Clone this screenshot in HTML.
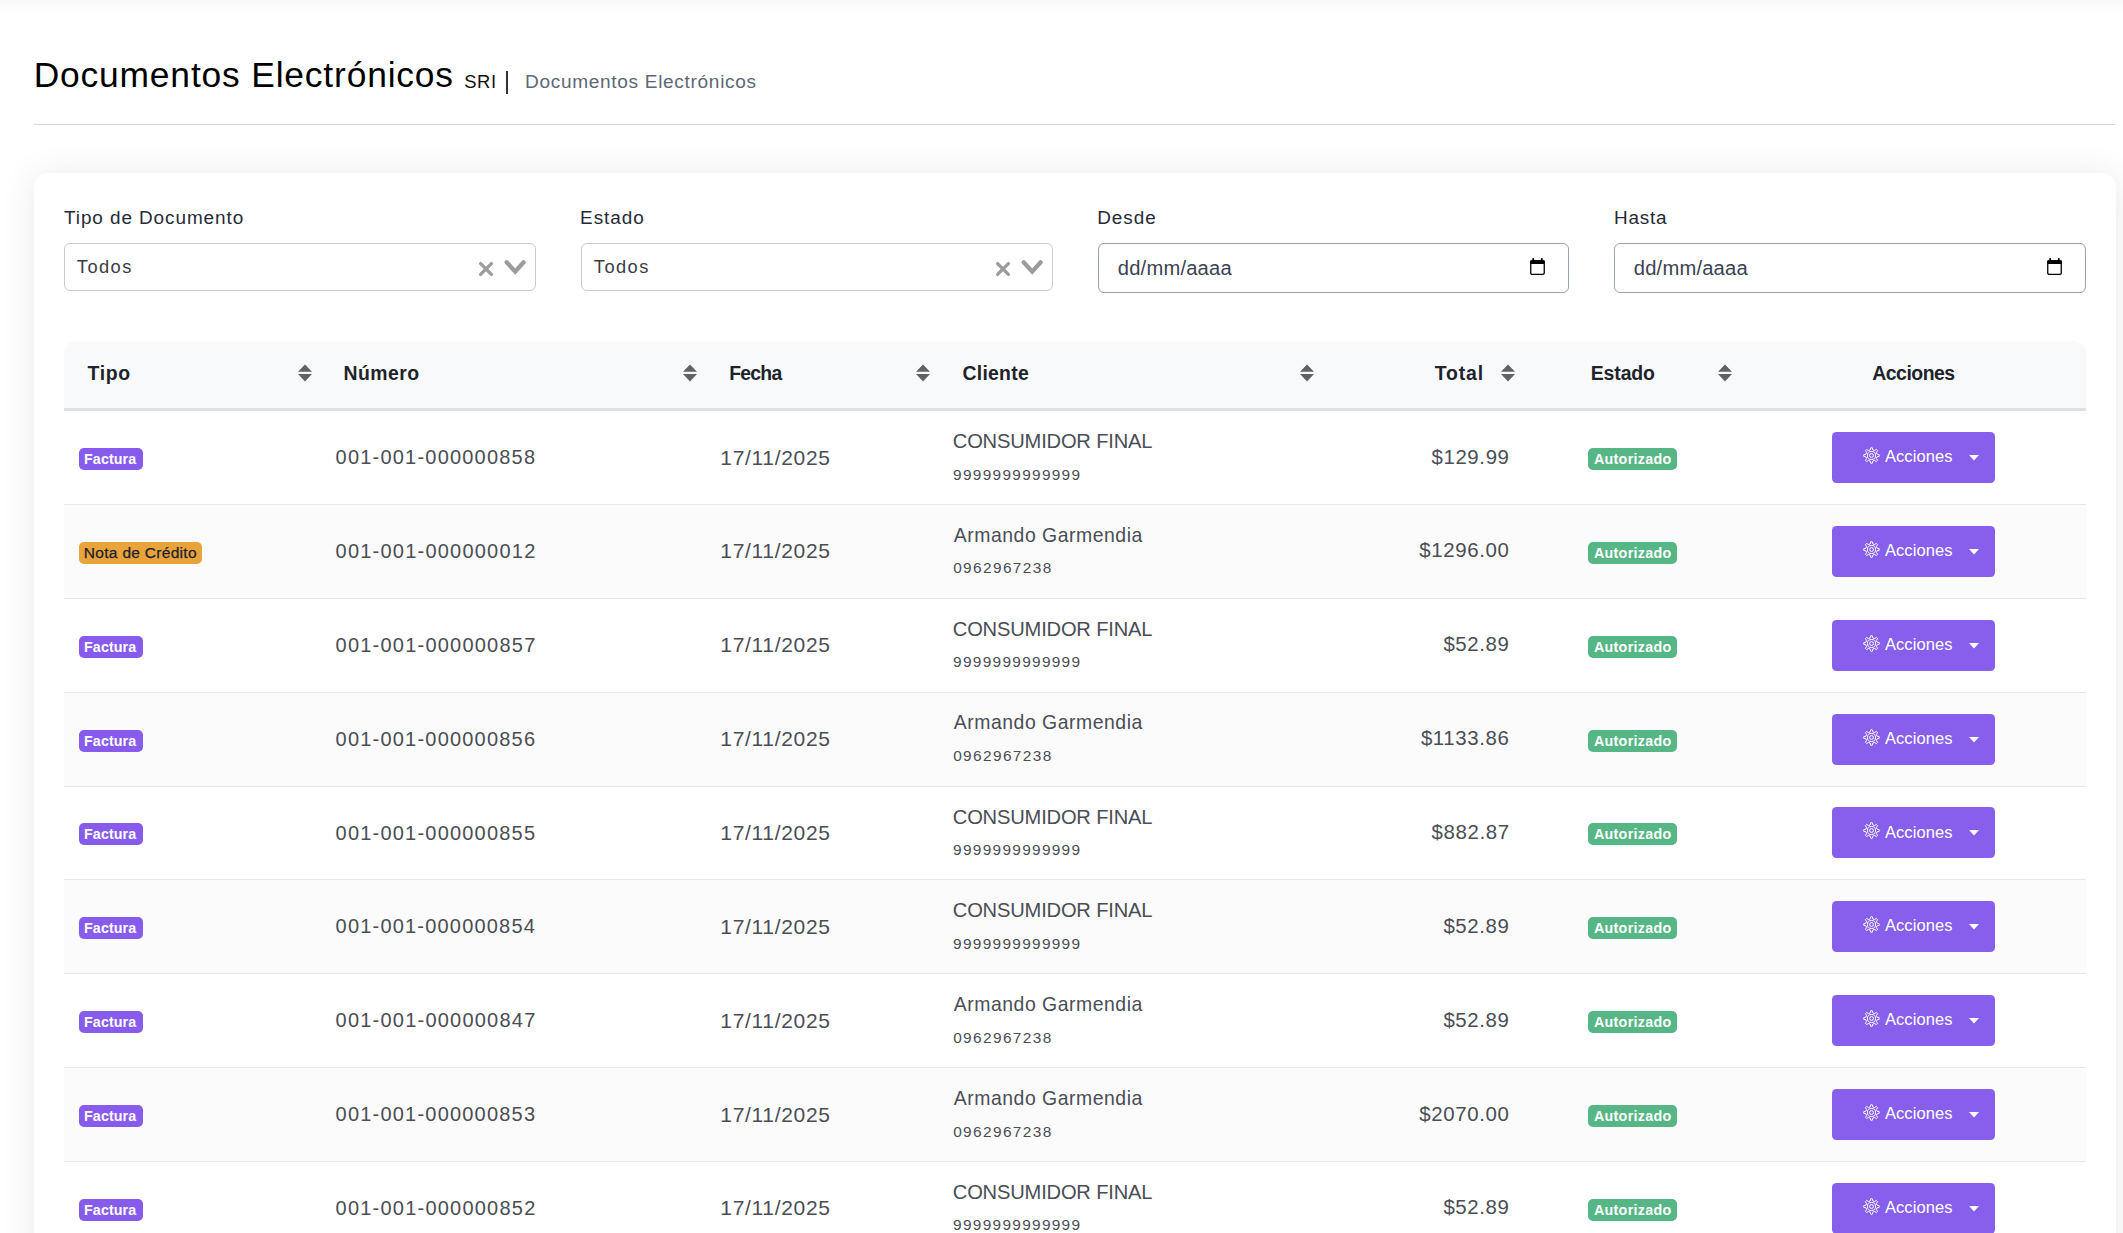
<!DOCTYPE html>
<html><head><meta charset="utf-8"><title>Documentos Electrónicos</title>
<style>
html,body{margin:0;padding:0;}
body{width:2123px;height:1233px;overflow:hidden;position:relative;background:#fff;font-family:"Liberation Sans",sans-serif;}
.t{position:absolute;white-space:nowrap;}
.r{position:absolute;}
.topshadow{position:absolute;left:-50px;right:-50px;top:-40px;height:40px;box-shadow:0 3px 14px rgba(0,0,0,0.04);background:#fff;}
.card{position:absolute;left:34px;top:173px;width:2082px;height:1200px;background:#fff;border-radius:14px;box-shadow:0 2px 36px rgba(0,0,0,0.09);}
.sel{position:absolute;top:243px;width:470px;height:46px;border:1px solid #cbcbcb;border-radius:6px;background:#fff;}
.date{position:absolute;top:243px;width:469px;height:48px;border:1px solid #9aa1b0;border-radius:6px;background:#fff;}
.thead{position:absolute;left:64px;top:341px;width:2022px;height:67px;background:#f8f9fa;border-radius:13px 13px 0 0;border-bottom:3px solid #dee1e6;}
.row{position:absolute;left:64px;width:2022px;border-bottom:1px solid #e6e8ec;}
.badge{height:22px;border-radius:5px;}
.btn{left:1832px;width:163px;height:51px;background:#875fec;border-radius:4.5px;}
</style></head><body>
<div class="topshadow"></div>
<div class="t" style="left:33.67px;top:57.15px;font-size:35.38px;line-height:35.38px;letter-spacing:0.832px;color:#000;">Documentos Electrónicos</div>
<div class="t" style="left:464.17px;top:72.63px;font-size:18.40px;line-height:18.40px;letter-spacing:0.674px;color:#111;">SRI</div>
<div class="r" style="left:506px;top:71px;width:2px;height:23px;background:#333;"></div>
<div class="t" style="left:524.97px;top:72.06px;font-size:19.07px;line-height:19.07px;letter-spacing:0.681px;color:#5d6777;">Documentos Electrónicos</div>
<div class="r" style="left:34px;top:124px;width:2081px;height:1px;background:#d6d7df;"></div>
<div class="card"></div>
<div class="t" style="left:64.02px;top:208.57px;font-size:18.93px;line-height:18.93px;letter-spacing:0.919px;color:#262a36;">Tipo de Documento</div>
<div class="t" style="left:580.09px;top:208.57px;font-size:18.93px;line-height:18.93px;letter-spacing:0.958px;color:#262a36;">Estado</div>
<div class="t" style="left:1097.19px;top:208.57px;font-size:18.93px;line-height:18.93px;letter-spacing:0.987px;color:#262a36;">Desde</div>
<div class="t" style="left:1614.09px;top:208.57px;font-size:18.93px;line-height:18.93px;letter-spacing:0.750px;color:#262a36;">Hasta</div>
<div class="sel" style="left:64px;"></div>
<div class="t" style="left:76.83px;top:257.54px;font-size:18.27px;line-height:18.27px;letter-spacing:1.433px;color:#3a3d45;">Todos</div>
<svg class="r" style="left:477.5px;top:260.8px" width="16" height="16" viewBox="0 0 16 16"><path d="M2.6 2.6L13.4 13.4M13.4 2.6L2.6 13.4" stroke="#9c9c9c" stroke-width="3.3" stroke-linecap="round"/></svg>
<svg class="r" style="left:504.4px;top:259.4px" width="22" height="16" viewBox="0 0 22 16"><path d="M2.7 3.3L11.2 12.6L19.6 3.3" fill="none" stroke="#9c9c9c" stroke-width="4.3" stroke-linecap="round" stroke-linejoin="miter"/></svg>
<div class="sel" style="left:581px;"></div>
<div class="t" style="left:593.83px;top:257.54px;font-size:18.27px;line-height:18.27px;letter-spacing:1.433px;color:#3a3d45;">Todos</div>
<svg class="r" style="left:994.5px;top:260.8px" width="16" height="16" viewBox="0 0 16 16"><path d="M2.6 2.6L13.4 13.4M13.4 2.6L2.6 13.4" stroke="#9c9c9c" stroke-width="3.3" stroke-linecap="round"/></svg>
<svg class="r" style="left:1021.4px;top:259.4px" width="22" height="16" viewBox="0 0 22 16"><path d="M2.7 3.3L11.2 12.6L19.6 3.3" fill="none" stroke="#9c9c9c" stroke-width="4.3" stroke-linecap="round" stroke-linejoin="miter"/></svg>
<div class="date" style="left:1098px;"></div>
<div class="t" style="left:1117.79px;top:257.92px;font-size:20.18px;line-height:20.18px;letter-spacing:0.192px;color:#3b4252;">dd/mm/aaaa</div>
<svg class="r" style="left:1529px;top:258px" width="17" height="18" viewBox="0 0 17 18"><path d="M4.2 1v2.5M12.8 1v2.5" stroke="#000" stroke-width="1.9" stroke-linecap="round"/><rect x="1.75" y="2.85" width="13.5" height="13.5" rx="1.4" fill="none" stroke="#000" stroke-width="1.3"/><rect x="1.1" y="2.2" width="14.8" height="3.7" rx="1.1" fill="#000"/></svg>
<div class="date" style="left:1614px;width:470px;"></div>
<div class="t" style="left:1633.79px;top:257.92px;font-size:20.18px;line-height:20.18px;letter-spacing:0.192px;color:#3b4252;">dd/mm/aaaa</div>
<svg class="r" style="left:2046px;top:258px" width="17" height="18" viewBox="0 0 17 18"><path d="M4.2 1v2.5M12.8 1v2.5" stroke="#000" stroke-width="1.9" stroke-linecap="round"/><rect x="1.75" y="2.85" width="13.5" height="13.5" rx="1.4" fill="none" stroke="#000" stroke-width="1.3"/><rect x="1.1" y="2.2" width="14.8" height="3.7" rx="1.1" fill="#000"/></svg>
<div class="thead"></div>
<div class="t" style="left:87.61px;top:364.28px;font-size:19.40px;line-height:19.40px;letter-spacing:0.641px;color:#1f232b;font-weight:700;">Tipo</div>
<div class="t" style="left:343.54px;top:364.28px;font-size:19.40px;line-height:19.40px;letter-spacing:0.461px;color:#1f232b;font-weight:700;">Número</div>
<div class="t" style="left:729.34px;top:364.28px;font-size:19.40px;line-height:19.40px;letter-spacing:-0.800px;color:#1f232b;font-weight:700;">Fecha</div>
<div class="t" style="left:962.52px;top:364.28px;font-size:19.40px;line-height:19.40px;letter-spacing:0.259px;color:#1f232b;font-weight:700;">Cliente</div>
<div class="t" style="left:1434.81px;top:364.28px;font-size:19.40px;line-height:19.40px;letter-spacing:0.860px;color:#1f232b;font-weight:700;">Total</div>
<div class="t" style="left:1590.74px;top:364.28px;font-size:19.40px;line-height:19.40px;letter-spacing:-0.092px;color:#1f232b;font-weight:700;">Estado</div>
<div class="t" style="left:1872.32px;top:364.28px;font-size:19.40px;line-height:19.40px;letter-spacing:-0.496px;color:#1f232b;font-weight:700;">Acciones</div>
<svg class="r" style="left:298px;top:364px" width="14" height="18" viewBox="0 0 14 18"><path d="M7 0.4L14 7.7H0Z M0 10.1H14L7 17.4Z" fill="#606266"/></svg>
<svg class="r" style="left:683px;top:364px" width="14" height="18" viewBox="0 0 14 18"><path d="M7 0.4L14 7.7H0Z M0 10.1H14L7 17.4Z" fill="#606266"/></svg>
<svg class="r" style="left:916px;top:364px" width="14" height="18" viewBox="0 0 14 18"><path d="M7 0.4L14 7.7H0Z M0 10.1H14L7 17.4Z" fill="#606266"/></svg>
<svg class="r" style="left:1300px;top:364px" width="14" height="18" viewBox="0 0 14 18"><path d="M7 0.4L14 7.7H0Z M0 10.1H14L7 17.4Z" fill="#606266"/></svg>
<svg class="r" style="left:1501px;top:364px" width="14" height="18" viewBox="0 0 14 18"><path d="M7 0.4L14 7.7H0Z M0 10.1H14L7 17.4Z" fill="#606266"/></svg>
<svg class="r" style="left:1718px;top:364px" width="14" height="18" viewBox="0 0 14 18"><path d="M7 0.4L14 7.7H0Z M0 10.1H14L7 17.4Z" fill="#606266"/></svg>
<div class="row" style="top:411px;height:93px;background:#fff;"></div>
<div class="r badge" style="left:79px;top:448px;width:64px;background:#875bec;"></div>
<div class="t" style="left:84.07px;top:452.02px;font-size:14.27px;line-height:14.27px;letter-spacing:0.097px;color:#fff;font-weight:700;">Factura</div>
<div class="t" style="left:335.60px;top:447.07px;font-size:20.00px;line-height:20.00px;letter-spacing:1.206px;color:#4a4d55;">001-001-000000858</div>
<div class="t" style="left:720.32px;top:446.61px;font-size:21.01px;line-height:21.01px;letter-spacing:0.679px;color:#4a4d55;">17/11/2025</div>
<div class="t" style="left:952.79px;top:431.15px;font-size:20.14px;line-height:20.14px;letter-spacing:-0.182px;color:#4a4d55;">CONSUMIDOR FINAL</div>
<div class="t" style="left:953.11px;top:466.54px;font-size:15.43px;line-height:15.43px;letter-spacing:1.287px;color:#4a4d55;">9999999999999</div>
<div class="t" style="left:1431.43px;top:446.60px;font-size:20.43px;line-height:20.43px;letter-spacing:0.620px;color:#4a4d55;">$129.99</div>
<div class="r badge" style="left:1588px;top:448px;width:89px;background:#57b685;"></div>
<div class="t" style="left:1593.94px;top:452.02px;font-size:14.27px;line-height:14.27px;letter-spacing:0.306px;color:#fff;font-weight:700;">Autorizado</div>
<div class="r btn" style="top:432px;"></div>
<div class="r" style="left:1862.5px;top:447.00px;width:17px;height:17px"><svg width="17" height="17" viewBox="0 0 24 24" fill="none" stroke="#fff" stroke-width="1.4" stroke-linejoin="round"><path d="M10.01 4.25 L10.88 1.06 L13.12 1.06 L13.99 4.25 L16.07 5.11 L18.94 3.47 L20.53 5.06 L18.89 7.93 L19.75 10.01 L22.94 10.88 L22.94 13.12 L19.75 13.99 L18.89 16.07 L20.53 18.94 L18.94 20.53 L16.07 18.89 L13.99 19.75 L13.12 22.94 L10.88 22.94 L10.01 19.75 L7.93 18.89 L5.06 20.53 L3.47 18.94 L5.11 16.07 L4.25 13.99 L1.06 13.12 L1.06 10.88 L4.25 10.01 L5.11 7.93 L3.47 5.06 L5.06 3.47 L7.93 5.11Z"/><circle cx="12" cy="12" r="5.7"/><circle cx="12" cy="12" r="2.7"/></svg></div>
<div class="t" style="left:1884.90px;top:449.11px;font-size:16.53px;line-height:16.53px;letter-spacing:0.079px;color:#fff;">Acciones</div>
<svg class="r" style="left:1969px;top:455px" width="10" height="6" viewBox="0 0 10 6"><path d="M0 0H10L5 5.5Z" fill="#fff"/></svg>
<div class="row" style="top:505px;height:93px;background:#fbfbfb;"></div>
<div class="r badge" style="left:79px;top:542px;width:123px;background:#e8a33b;"></div>
<div class="t" style="left:83.86px;top:544.83px;font-size:15.51px;line-height:15.51px;letter-spacing:0.295px;color:#1d2030;-webkit-text-stroke:0.25px #1d2030;">Nota de Crédito</div>
<div class="t" style="left:335.60px;top:540.93px;font-size:20.00px;line-height:20.00px;letter-spacing:1.219px;color:#4a4d55;">001-001-000000012</div>
<div class="t" style="left:720.32px;top:540.47px;font-size:21.01px;line-height:21.01px;letter-spacing:0.679px;color:#4a4d55;">17/11/2025</div>
<div class="t" style="left:953.80px;top:525.63px;font-size:19.41px;line-height:19.41px;letter-spacing:0.522px;color:#4a4d55;">Armando Garmendia</div>
<div class="t" style="left:953.18px;top:560.40px;font-size:15.43px;line-height:15.43px;letter-spacing:1.372px;color:#4a4d55;">0962967238</div>
<div class="t" style="left:1419.26px;top:540.46px;font-size:20.43px;line-height:20.43px;letter-spacing:0.620px;color:#4a4d55;">$1296.00</div>
<div class="r badge" style="left:1588px;top:542px;width:89px;background:#57b685;"></div>
<div class="t" style="left:1593.94px;top:545.88px;font-size:14.27px;line-height:14.27px;letter-spacing:0.306px;color:#fff;font-weight:700;">Autorizado</div>
<div class="r btn" style="top:526px;"></div>
<div class="r" style="left:1862.5px;top:540.86px;width:17px;height:17px"><svg width="17" height="17" viewBox="0 0 24 24" fill="none" stroke="#fff" stroke-width="1.4" stroke-linejoin="round"><path d="M10.01 4.25 L10.88 1.06 L13.12 1.06 L13.99 4.25 L16.07 5.11 L18.94 3.47 L20.53 5.06 L18.89 7.93 L19.75 10.01 L22.94 10.88 L22.94 13.12 L19.75 13.99 L18.89 16.07 L20.53 18.94 L18.94 20.53 L16.07 18.89 L13.99 19.75 L13.12 22.94 L10.88 22.94 L10.01 19.75 L7.93 18.89 L5.06 20.53 L3.47 18.94 L5.11 16.07 L4.25 13.99 L1.06 13.12 L1.06 10.88 L4.25 10.01 L5.11 7.93 L3.47 5.06 L5.06 3.47 L7.93 5.11Z"/><circle cx="12" cy="12" r="5.7"/><circle cx="12" cy="12" r="2.7"/></svg></div>
<div class="t" style="left:1884.90px;top:542.96px;font-size:16.53px;line-height:16.53px;letter-spacing:0.079px;color:#fff;">Acciones</div>
<svg class="r" style="left:1969px;top:549px" width="10" height="6" viewBox="0 0 10 6"><path d="M0 0H10L5 5.5Z" fill="#fff"/></svg>
<div class="row" style="top:599px;height:93px;background:#fff;"></div>
<div class="r badge" style="left:79px;top:636px;width:64px;background:#875bec;"></div>
<div class="t" style="left:84.07px;top:639.74px;font-size:14.27px;line-height:14.27px;letter-spacing:0.097px;color:#fff;font-weight:700;">Factura</div>
<div class="t" style="left:335.60px;top:634.79px;font-size:20.00px;line-height:20.00px;letter-spacing:1.219px;color:#4a4d55;">001-001-000000857</div>
<div class="t" style="left:720.32px;top:634.33px;font-size:21.01px;line-height:21.01px;letter-spacing:0.679px;color:#4a4d55;">17/11/2025</div>
<div class="t" style="left:952.79px;top:618.87px;font-size:20.14px;line-height:20.14px;letter-spacing:-0.182px;color:#4a4d55;">CONSUMIDOR FINAL</div>
<div class="t" style="left:953.11px;top:654.26px;font-size:15.43px;line-height:15.43px;letter-spacing:1.287px;color:#4a4d55;">9999999999999</div>
<div class="t" style="left:1443.39px;top:634.32px;font-size:20.43px;line-height:20.43px;letter-spacing:0.620px;color:#4a4d55;">$52.89</div>
<div class="r badge" style="left:1588px;top:636px;width:89px;background:#57b685;"></div>
<div class="t" style="left:1593.94px;top:639.74px;font-size:14.27px;line-height:14.27px;letter-spacing:0.306px;color:#fff;font-weight:700;">Autorizado</div>
<div class="r btn" style="top:620px;"></div>
<div class="r" style="left:1862.5px;top:634.71px;width:17px;height:17px"><svg width="17" height="17" viewBox="0 0 24 24" fill="none" stroke="#fff" stroke-width="1.4" stroke-linejoin="round"><path d="M10.01 4.25 L10.88 1.06 L13.12 1.06 L13.99 4.25 L16.07 5.11 L18.94 3.47 L20.53 5.06 L18.89 7.93 L19.75 10.01 L22.94 10.88 L22.94 13.12 L19.75 13.99 L18.89 16.07 L20.53 18.94 L18.94 20.53 L16.07 18.89 L13.99 19.75 L13.12 22.94 L10.88 22.94 L10.01 19.75 L7.93 18.89 L5.06 20.53 L3.47 18.94 L5.11 16.07 L4.25 13.99 L1.06 13.12 L1.06 10.88 L4.25 10.01 L5.11 7.93 L3.47 5.06 L5.06 3.47 L7.93 5.11Z"/><circle cx="12" cy="12" r="5.7"/><circle cx="12" cy="12" r="2.7"/></svg></div>
<div class="t" style="left:1884.90px;top:636.82px;font-size:16.53px;line-height:16.53px;letter-spacing:0.079px;color:#fff;">Acciones</div>
<svg class="r" style="left:1969px;top:643px" width="10" height="6" viewBox="0 0 10 6"><path d="M0 0H10L5 5.5Z" fill="#fff"/></svg>
<div class="row" style="top:693px;height:93px;background:#fbfbfb;"></div>
<div class="r badge" style="left:79px;top:730px;width:64px;background:#875bec;"></div>
<div class="t" style="left:84.07px;top:733.60px;font-size:14.27px;line-height:14.27px;letter-spacing:0.097px;color:#fff;font-weight:700;">Factura</div>
<div class="t" style="left:335.60px;top:728.64px;font-size:20.00px;line-height:20.00px;letter-spacing:1.206px;color:#4a4d55;">001-001-000000856</div>
<div class="t" style="left:720.32px;top:728.18px;font-size:21.01px;line-height:21.01px;letter-spacing:0.679px;color:#4a4d55;">17/11/2025</div>
<div class="t" style="left:953.80px;top:713.34px;font-size:19.41px;line-height:19.41px;letter-spacing:0.522px;color:#4a4d55;">Armando Garmendia</div>
<div class="t" style="left:953.18px;top:748.11px;font-size:15.43px;line-height:15.43px;letter-spacing:1.372px;color:#4a4d55;">0962967238</div>
<div class="t" style="left:1420.90px;top:728.18px;font-size:20.43px;line-height:20.43px;letter-spacing:0.620px;color:#4a4d55;">$1133.86</div>
<div class="r badge" style="left:1588px;top:730px;width:89px;background:#57b685;"></div>
<div class="t" style="left:1593.94px;top:733.60px;font-size:14.27px;line-height:14.27px;letter-spacing:0.306px;color:#fff;font-weight:700;">Autorizado</div>
<div class="r btn" style="top:714px;"></div>
<div class="r" style="left:1862.5px;top:728.57px;width:17px;height:17px"><svg width="17" height="17" viewBox="0 0 24 24" fill="none" stroke="#fff" stroke-width="1.4" stroke-linejoin="round"><path d="M10.01 4.25 L10.88 1.06 L13.12 1.06 L13.99 4.25 L16.07 5.11 L18.94 3.47 L20.53 5.06 L18.89 7.93 L19.75 10.01 L22.94 10.88 L22.94 13.12 L19.75 13.99 L18.89 16.07 L20.53 18.94 L18.94 20.53 L16.07 18.89 L13.99 19.75 L13.12 22.94 L10.88 22.94 L10.01 19.75 L7.93 18.89 L5.06 20.53 L3.47 18.94 L5.11 16.07 L4.25 13.99 L1.06 13.12 L1.06 10.88 L4.25 10.01 L5.11 7.93 L3.47 5.06 L5.06 3.47 L7.93 5.11Z"/><circle cx="12" cy="12" r="5.7"/><circle cx="12" cy="12" r="2.7"/></svg></div>
<div class="t" style="left:1884.90px;top:730.68px;font-size:16.53px;line-height:16.53px;letter-spacing:0.079px;color:#fff;">Acciones</div>
<svg class="r" style="left:1969px;top:737px" width="10" height="6" viewBox="0 0 10 6"><path d="M0 0H10L5 5.5Z" fill="#fff"/></svg>
<div class="row" style="top:787px;height:92px;background:#fff;"></div>
<div class="r badge" style="left:79px;top:823px;width:64px;background:#875bec;"></div>
<div class="t" style="left:84.07px;top:827.45px;font-size:14.27px;line-height:14.27px;letter-spacing:0.097px;color:#fff;font-weight:700;">Factura</div>
<div class="t" style="left:335.60px;top:822.50px;font-size:20.00px;line-height:20.00px;letter-spacing:1.206px;color:#4a4d55;">001-001-000000855</div>
<div class="t" style="left:720.32px;top:822.04px;font-size:21.01px;line-height:21.01px;letter-spacing:0.679px;color:#4a4d55;">17/11/2025</div>
<div class="t" style="left:952.79px;top:806.58px;font-size:20.14px;line-height:20.14px;letter-spacing:-0.182px;color:#4a4d55;">CONSUMIDOR FINAL</div>
<div class="t" style="left:953.11px;top:841.97px;font-size:15.43px;line-height:15.43px;letter-spacing:1.287px;color:#4a4d55;">9999999999999</div>
<div class="t" style="left:1431.53px;top:822.03px;font-size:20.43px;line-height:20.43px;letter-spacing:0.620px;color:#4a4d55;">$882.87</div>
<div class="r badge" style="left:1588px;top:823px;width:89px;background:#57b685;"></div>
<div class="t" style="left:1593.94px;top:827.45px;font-size:14.27px;line-height:14.27px;letter-spacing:0.306px;color:#fff;font-weight:700;">Autorizado</div>
<div class="r btn" style="top:807px;"></div>
<div class="r" style="left:1862.5px;top:822.43px;width:17px;height:17px"><svg width="17" height="17" viewBox="0 0 24 24" fill="none" stroke="#fff" stroke-width="1.4" stroke-linejoin="round"><path d="M10.01 4.25 L10.88 1.06 L13.12 1.06 L13.99 4.25 L16.07 5.11 L18.94 3.47 L20.53 5.06 L18.89 7.93 L19.75 10.01 L22.94 10.88 L22.94 13.12 L19.75 13.99 L18.89 16.07 L20.53 18.94 L18.94 20.53 L16.07 18.89 L13.99 19.75 L13.12 22.94 L10.88 22.94 L10.01 19.75 L7.93 18.89 L5.06 20.53 L3.47 18.94 L5.11 16.07 L4.25 13.99 L1.06 13.12 L1.06 10.88 L4.25 10.01 L5.11 7.93 L3.47 5.06 L5.06 3.47 L7.93 5.11Z"/><circle cx="12" cy="12" r="5.7"/><circle cx="12" cy="12" r="2.7"/></svg></div>
<div class="t" style="left:1884.90px;top:824.53px;font-size:16.53px;line-height:16.53px;letter-spacing:0.079px;color:#fff;">Acciones</div>
<svg class="r" style="left:1969px;top:830px" width="10" height="6" viewBox="0 0 10 6"><path d="M0 0H10L5 5.5Z" fill="#fff"/></svg>
<div class="row" style="top:880px;height:93px;background:#fbfbfb;"></div>
<div class="r badge" style="left:79px;top:917px;width:64px;background:#875bec;"></div>
<div class="t" style="left:84.07px;top:921.31px;font-size:14.27px;line-height:14.27px;letter-spacing:0.097px;color:#fff;font-weight:700;">Factura</div>
<div class="t" style="left:335.60px;top:916.36px;font-size:20.00px;line-height:20.00px;letter-spacing:1.194px;color:#4a4d55;">001-001-000000854</div>
<div class="t" style="left:720.32px;top:915.90px;font-size:21.01px;line-height:21.01px;letter-spacing:0.679px;color:#4a4d55;">17/11/2025</div>
<div class="t" style="left:952.79px;top:900.44px;font-size:20.14px;line-height:20.14px;letter-spacing:-0.182px;color:#4a4d55;">CONSUMIDOR FINAL</div>
<div class="t" style="left:953.11px;top:935.83px;font-size:15.43px;line-height:15.43px;letter-spacing:1.287px;color:#4a4d55;">9999999999999</div>
<div class="t" style="left:1443.39px;top:915.89px;font-size:20.43px;line-height:20.43px;letter-spacing:0.620px;color:#4a4d55;">$52.89</div>
<div class="r badge" style="left:1588px;top:917px;width:89px;background:#57b685;"></div>
<div class="t" style="left:1593.94px;top:921.31px;font-size:14.27px;line-height:14.27px;letter-spacing:0.306px;color:#fff;font-weight:700;">Autorizado</div>
<div class="r btn" style="top:901px;"></div>
<div class="r" style="left:1862.5px;top:916.28px;width:17px;height:17px"><svg width="17" height="17" viewBox="0 0 24 24" fill="none" stroke="#fff" stroke-width="1.4" stroke-linejoin="round"><path d="M10.01 4.25 L10.88 1.06 L13.12 1.06 L13.99 4.25 L16.07 5.11 L18.94 3.47 L20.53 5.06 L18.89 7.93 L19.75 10.01 L22.94 10.88 L22.94 13.12 L19.75 13.99 L18.89 16.07 L20.53 18.94 L18.94 20.53 L16.07 18.89 L13.99 19.75 L13.12 22.94 L10.88 22.94 L10.01 19.75 L7.93 18.89 L5.06 20.53 L3.47 18.94 L5.11 16.07 L4.25 13.99 L1.06 13.12 L1.06 10.88 L4.25 10.01 L5.11 7.93 L3.47 5.06 L5.06 3.47 L7.93 5.11Z"/><circle cx="12" cy="12" r="5.7"/><circle cx="12" cy="12" r="2.7"/></svg></div>
<div class="t" style="left:1884.90px;top:918.39px;font-size:16.53px;line-height:16.53px;letter-spacing:0.079px;color:#fff;">Acciones</div>
<svg class="r" style="left:1969px;top:924px" width="10" height="6" viewBox="0 0 10 6"><path d="M0 0H10L5 5.5Z" fill="#fff"/></svg>
<div class="row" style="top:974px;height:93px;background:#fff;"></div>
<div class="r badge" style="left:79px;top:1011px;width:64px;background:#875bec;"></div>
<div class="t" style="left:84.07px;top:1015.17px;font-size:14.27px;line-height:14.27px;letter-spacing:0.097px;color:#fff;font-weight:700;">Factura</div>
<div class="t" style="left:335.60px;top:1010.21px;font-size:20.00px;line-height:20.00px;letter-spacing:1.219px;color:#4a4d55;">001-001-000000847</div>
<div class="t" style="left:720.32px;top:1009.76px;font-size:21.01px;line-height:21.01px;letter-spacing:0.679px;color:#4a4d55;">17/11/2025</div>
<div class="t" style="left:953.80px;top:994.91px;font-size:19.41px;line-height:19.41px;letter-spacing:0.522px;color:#4a4d55;">Armando Garmendia</div>
<div class="t" style="left:953.18px;top:1029.68px;font-size:15.43px;line-height:15.43px;letter-spacing:1.372px;color:#4a4d55;">0962967238</div>
<div class="t" style="left:1443.39px;top:1009.75px;font-size:20.43px;line-height:20.43px;letter-spacing:0.620px;color:#4a4d55;">$52.89</div>
<div class="r badge" style="left:1588px;top:1011px;width:89px;background:#57b685;"></div>
<div class="t" style="left:1593.94px;top:1015.17px;font-size:14.27px;line-height:14.27px;letter-spacing:0.306px;color:#fff;font-weight:700;">Autorizado</div>
<div class="r btn" style="top:995px;"></div>
<div class="r" style="left:1862.5px;top:1010.14px;width:17px;height:17px"><svg width="17" height="17" viewBox="0 0 24 24" fill="none" stroke="#fff" stroke-width="1.4" stroke-linejoin="round"><path d="M10.01 4.25 L10.88 1.06 L13.12 1.06 L13.99 4.25 L16.07 5.11 L18.94 3.47 L20.53 5.06 L18.89 7.93 L19.75 10.01 L22.94 10.88 L22.94 13.12 L19.75 13.99 L18.89 16.07 L20.53 18.94 L18.94 20.53 L16.07 18.89 L13.99 19.75 L13.12 22.94 L10.88 22.94 L10.01 19.75 L7.93 18.89 L5.06 20.53 L3.47 18.94 L5.11 16.07 L4.25 13.99 L1.06 13.12 L1.06 10.88 L4.25 10.01 L5.11 7.93 L3.47 5.06 L5.06 3.47 L7.93 5.11Z"/><circle cx="12" cy="12" r="5.7"/><circle cx="12" cy="12" r="2.7"/></svg></div>
<div class="t" style="left:1884.90px;top:1012.25px;font-size:16.53px;line-height:16.53px;letter-spacing:0.079px;color:#fff;">Acciones</div>
<svg class="r" style="left:1969px;top:1018px" width="10" height="6" viewBox="0 0 10 6"><path d="M0 0H10L5 5.5Z" fill="#fff"/></svg>
<div class="row" style="top:1068px;height:93px;background:#fbfbfb;"></div>
<div class="r badge" style="left:79px;top:1105px;width:64px;background:#875bec;"></div>
<div class="t" style="left:84.07px;top:1109.02px;font-size:14.27px;line-height:14.27px;letter-spacing:0.097px;color:#fff;font-weight:700;">Factura</div>
<div class="t" style="left:335.60px;top:1104.07px;font-size:20.00px;line-height:20.00px;letter-spacing:1.206px;color:#4a4d55;">001-001-000000853</div>
<div class="t" style="left:720.32px;top:1103.61px;font-size:21.01px;line-height:21.01px;letter-spacing:0.679px;color:#4a4d55;">17/11/2025</div>
<div class="t" style="left:953.80px;top:1088.77px;font-size:19.41px;line-height:19.41px;letter-spacing:0.522px;color:#4a4d55;">Armando Garmendia</div>
<div class="t" style="left:953.18px;top:1123.54px;font-size:15.43px;line-height:15.43px;letter-spacing:1.372px;color:#4a4d55;">0962967238</div>
<div class="t" style="left:1419.26px;top:1103.60px;font-size:20.43px;line-height:20.43px;letter-spacing:0.620px;color:#4a4d55;">$2070.00</div>
<div class="r badge" style="left:1588px;top:1105px;width:89px;background:#57b685;"></div>
<div class="t" style="left:1593.94px;top:1109.02px;font-size:14.27px;line-height:14.27px;letter-spacing:0.306px;color:#fff;font-weight:700;">Autorizado</div>
<div class="r btn" style="top:1089px;"></div>
<div class="r" style="left:1862.5px;top:1104.00px;width:17px;height:17px"><svg width="17" height="17" viewBox="0 0 24 24" fill="none" stroke="#fff" stroke-width="1.4" stroke-linejoin="round"><path d="M10.01 4.25 L10.88 1.06 L13.12 1.06 L13.99 4.25 L16.07 5.11 L18.94 3.47 L20.53 5.06 L18.89 7.93 L19.75 10.01 L22.94 10.88 L22.94 13.12 L19.75 13.99 L18.89 16.07 L20.53 18.94 L18.94 20.53 L16.07 18.89 L13.99 19.75 L13.12 22.94 L10.88 22.94 L10.01 19.75 L7.93 18.89 L5.06 20.53 L3.47 18.94 L5.11 16.07 L4.25 13.99 L1.06 13.12 L1.06 10.88 L4.25 10.01 L5.11 7.93 L3.47 5.06 L5.06 3.47 L7.93 5.11Z"/><circle cx="12" cy="12" r="5.7"/><circle cx="12" cy="12" r="2.7"/></svg></div>
<div class="t" style="left:1884.90px;top:1106.11px;font-size:16.53px;line-height:16.53px;letter-spacing:0.079px;color:#fff;">Acciones</div>
<svg class="r" style="left:1969px;top:1112px" width="10" height="6" viewBox="0 0 10 6"><path d="M0 0H10L5 5.5Z" fill="#fff"/></svg>
<div class="row" style="top:1162px;height:93px;background:#fff;"></div>
<div class="r badge" style="left:79px;top:1199px;width:64px;background:#875bec;"></div>
<div class="t" style="left:84.07px;top:1202.88px;font-size:14.27px;line-height:14.27px;letter-spacing:0.097px;color:#fff;font-weight:700;">Factura</div>
<div class="t" style="left:335.60px;top:1197.93px;font-size:20.00px;line-height:20.00px;letter-spacing:1.219px;color:#4a4d55;">001-001-000000852</div>
<div class="t" style="left:720.32px;top:1197.47px;font-size:21.01px;line-height:21.01px;letter-spacing:0.679px;color:#4a4d55;">17/11/2025</div>
<div class="t" style="left:952.79px;top:1182.01px;font-size:20.14px;line-height:20.14px;letter-spacing:-0.182px;color:#4a4d55;">CONSUMIDOR FINAL</div>
<div class="t" style="left:953.11px;top:1217.40px;font-size:15.43px;line-height:15.43px;letter-spacing:1.287px;color:#4a4d55;">9999999999999</div>
<div class="t" style="left:1443.39px;top:1197.46px;font-size:20.43px;line-height:20.43px;letter-spacing:0.620px;color:#4a4d55;">$52.89</div>
<div class="r badge" style="left:1588px;top:1199px;width:89px;background:#57b685;"></div>
<div class="t" style="left:1593.94px;top:1202.88px;font-size:14.27px;line-height:14.27px;letter-spacing:0.306px;color:#fff;font-weight:700;">Autorizado</div>
<div class="r btn" style="top:1183px;"></div>
<div class="r" style="left:1862.5px;top:1197.86px;width:17px;height:17px"><svg width="17" height="17" viewBox="0 0 24 24" fill="none" stroke="#fff" stroke-width="1.4" stroke-linejoin="round"><path d="M10.01 4.25 L10.88 1.06 L13.12 1.06 L13.99 4.25 L16.07 5.11 L18.94 3.47 L20.53 5.06 L18.89 7.93 L19.75 10.01 L22.94 10.88 L22.94 13.12 L19.75 13.99 L18.89 16.07 L20.53 18.94 L18.94 20.53 L16.07 18.89 L13.99 19.75 L13.12 22.94 L10.88 22.94 L10.01 19.75 L7.93 18.89 L5.06 20.53 L3.47 18.94 L5.11 16.07 L4.25 13.99 L1.06 13.12 L1.06 10.88 L4.25 10.01 L5.11 7.93 L3.47 5.06 L5.06 3.47 L7.93 5.11Z"/><circle cx="12" cy="12" r="5.7"/><circle cx="12" cy="12" r="2.7"/></svg></div>
<div class="t" style="left:1884.90px;top:1199.96px;font-size:16.53px;line-height:16.53px;letter-spacing:0.079px;color:#fff;">Acciones</div>
<svg class="r" style="left:1969px;top:1206px" width="10" height="6" viewBox="0 0 10 6"><path d="M0 0H10L5 5.5Z" fill="#fff"/></svg>
</body></html>
